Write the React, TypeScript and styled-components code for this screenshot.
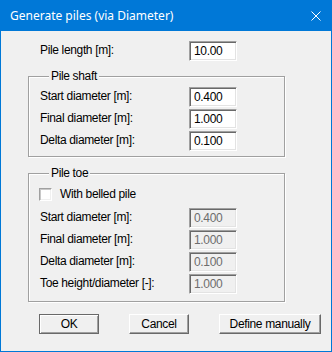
import React from 'react'
import styled, { createGlobalStyle } from 'styled-components'

const uiFont = `'Liberation Sans', Arial, sans-serif`

const GlobalStyle = createGlobalStyle`
  html, body {
    margin: 0;
    padding: 0;
    background: #f0f0f0;
  }
  body {
    font-family: ${uiFont};
    font-size: 12px;
    letter-spacing: -0.35px;
    color: #000;
  }
`

const shaftRows = [
  { label: 'Start diameter [m]:', value: '0.400' },
  { label: 'Final diameter [m]:', value: '1.000' },
  { label: 'Delta diameter [m]:', value: '0.100' },
]

const toeRows = [
  { label: 'Start diameter [m]:', value: '0.400' },
  { label: 'Final diameter [m]:', value: '1.000' },
  { label: 'Delta diameter [m]:', value: '0.100' },
  { label: 'Toe height/diameter [-]:', value: '1.000' },
]

function App() {
  return (
    <>
      <GlobalStyle />
      <Window>
        <TitleBar>
          <Title>Generate piles (via Diameter)</Title>
          <CloseButton aria-label="Close">
            <svg width="10" height="10" viewBox="0 0 10 10">
              <path d="M0.5 0.5 L9.5 9.5 M9.5 0.5 L0.5 9.5" stroke="#fff" strokeWidth="1" fill="none" />
            </svg>
          </CloseButton>
        </TitleBar>
        <Body>
          <TopRow>
            <Label>Pile length [m]:</Label>
            <Input defaultValue="10.00" />
          </TopRow>

          <Group>
            <Legend>Pile shaft</Legend>
            <Rows>
              {shaftRows.map((r) => (
                <Row key={r.label}>
                  <Label>{r.label}</Label>
                  <Input defaultValue={r.value} />
                </Row>
              ))}
            </Rows>
          </Group>

          <Group $gapTop={10} $padBottom={7}>
            <Legend>Pile toe</Legend>
            <CheckRow>
              <CheckBox />
              <span>With belled pile</span>
            </CheckRow>
            <Rows>
              {toeRows.map((r) => (
                <Row key={r.label}>
                  <Label>{r.label}</Label>
                  <Input defaultValue={r.value} disabled />
                </Row>
              ))}
            </Rows>
          </Group>

          <Buttons>
            <Button $default>OK</Button>
            <Button>Cancel</Button>
            <Button $wide>Define manually</Button>
          </Buttons>
        </Body>
      </Window>
    </>
  )
}

const Window = styled.div`
  width: 332px;
  height: 352px;
  box-sizing: border-box;
  border: 1px solid #0078d7;
  border-top: none;
  background: #f0f0f0;
  display: flex;
  flex-direction: column;
  overflow: hidden;
`

const TitleBar = styled.div`
  height: 31px;
  margin: 0 -1px;
  background: #0078d7;
  color: #fff;
  display: flex;
  align-items: center;
  justify-content: space-between;
  padding: 0 10px 0 10px;
  box-sizing: border-box;
`

const Title = styled.span`
  font-family: 'Noto Sans', 'Open Sans', sans-serif;
  font-size: 12px;
  letter-spacing: 0;
  line-height: 16px;
  margin-top: 1px;
`

const CloseButton = styled.span`
  display: flex;
  width: 10px;
  height: 10px;
  margin-right: 1px;
  margin-top: 1px;
`

const Body = styled.div`
  padding: 10px 0 0 0;
  display: flex;
  flex-direction: column;
`

const TopRow = styled.div`
  display: flex;
  align-items: flex-start;
  height: 20px;
  padding-left: 39px;
`

const Row = styled.div`
  display: flex;
  align-items: flex-start;
  height: 20px;
`

const Rows = styled.div`
  display: flex;
  flex-direction: column;
  gap: 2px;
`

const Label = styled.span`
  width: 149px;
  line-height: 14px;
  padding-top: 2px;
  white-space: nowrap;
`

const Input = styled.input`
  width: 48px;
  height: 20px;
  box-sizing: border-box;
  margin: 0;
  padding: 0 0 0 4px;
  font-family: ${uiFont};
  font-size: 12px;
  letter-spacing: -0.35px;
  color: #000;
  background: #fff;
  border-style: solid;
  border-width: 1px;
  border-color: #a0a0a0 #fff #fff #a0a0a0;
  box-shadow: inset 1px 1px 0 #696969, inset -1px -1px 0 #e3e3e3;
  outline: none;

  &:disabled {
    background: #f0f0f0;
    color: #6d6d6d;
  }
`

const Group = styled.fieldset<{ $gapTop?: number; $padBottom?: number }>`
  width: 257px;
  box-sizing: border-box;
  margin: ${(p) => p.$gapTop ?? 9}px 0 0 27px;
  padding: 4px 0 ${(p) => p.$padBottom ?? 5}px 11px;
  border: 1px solid #a0a0a0;
  box-shadow: inset 1px 1px 0 #fff, 1px 1px 0 #fff;
  min-width: 0;
`

const Legend = styled.legend`
  padding: 0 2px;
  margin-left: 9px;
  line-height: 13px;
  height: 13px;
  background: #f0f0f0;
`

const CheckRow = styled.label`
  display: flex;
  align-items: center;
  gap: 8px;
  height: 13px;
  margin: 4px 0 7px 0;
  line-height: 13px;
`

const CheckBox = styled.span`
  display: inline-block;
  width: 13px;
  height: 13px;
  box-sizing: border-box;
  margin-left: -1px;
  background: #fff;
  border: 1px solid;
  border-color: #a0a0a0 #fff #fff #a0a0a0;
  box-shadow: inset 1px 1px 0 #c8c8c8, inset -1px -1px 0 #f0f0f0;
`

const Buttons = styled.div`
  display: flex;
  gap: 30px;
  margin-top: 12px;
  padding-left: 38px;
`

const Button = styled.button<{ $default?: boolean; $wide?: boolean }>`
  width: ${(p) => (p.$wide ? 102 : 60)}px;
  height: 20px;
  box-sizing: border-box;
  margin: 0;
  padding: 0;
  font-family: ${uiFont};
  font-size: 12px;
  letter-spacing: -0.35px;
  color: #000;
  background: #f0f0f0;
  border: 1px solid;
  border-color: ${(p) => (p.$default ? '#696969' : '#fff #696969 #696969 #fff')};
  box-shadow: ${(p) =>
    p.$default
      ? 'inset 1px 1px 0 #fff, inset -1px -1px 0 #a0a0a0'
      : 'inset -1px -1px 0 #a0a0a0'};
`

export default App
